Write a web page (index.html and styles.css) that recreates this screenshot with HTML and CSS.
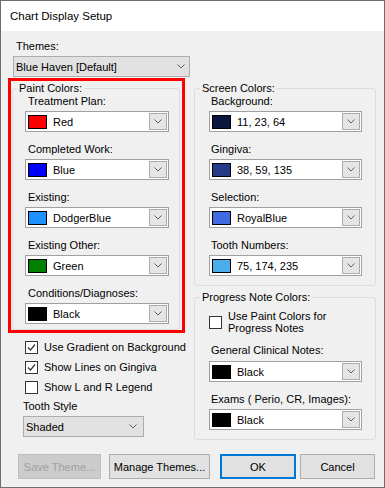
FILE: index.html
```html
<!DOCTYPE html>
<html lang="en">
<head>
    <meta charset="UTF-8">
    <title>Chart Display Setup</title>
    <link rel="stylesheet" href="styles.css">
</head>
<body>

<div class="dialog">
    <div class="titlebar">Chart Display Setup</div>

    <div class="content">
        <div class="themes">
            <div class="label">Themes:</div>
            <div class="dropdown">
                <span>Blue Haven [Default]</span>
                <svg class="chev" width="8" height="5" viewBox="0 0 8 5"><polyline points="0.5,0.5 4,4 7.5,0.5"/></svg>
            </div>
        </div>

        <div class="columns">
            <div class="left">
                <div class="highlight">
                    <fieldset class="group paint">
                        <legend>Paint Colors:</legend>
                        <div class="fields">
                            <div class="label">Treatment Plan:</div>
                            <div class="color-combo">
                                <span class="swatch" style="background:#ff0000"></span>
                                <span class="name">Red</span>
                                <span class="drop"><svg class="chev" width="8" height="5" viewBox="0 0 8 5"><polyline points="0.5,0.5 4,4 7.5,0.5"/></svg></span>
                            </div>

                            <div class="label">Completed Work:</div>
                            <div class="color-combo">
                                <span class="swatch" style="background:#0000ff"></span>
                                <span class="name">Blue</span>
                                <span class="drop"><svg class="chev" width="8" height="5" viewBox="0 0 8 5"><polyline points="0.5,0.5 4,4 7.5,0.5"/></svg></span>
                            </div>

                            <div class="label">Existing:</div>
                            <div class="color-combo">
                                <span class="swatch" style="background:#1e90ff"></span>
                                <span class="name">DodgerBlue</span>
                                <span class="drop"><svg class="chev" width="8" height="5" viewBox="0 0 8 5"><polyline points="0.5,0.5 4,4 7.5,0.5"/></svg></span>
                            </div>

                            <div class="label">Existing Other:</div>
                            <div class="color-combo">
                                <span class="swatch" style="background:#008000"></span>
                                <span class="name">Green</span>
                                <span class="drop"><svg class="chev" width="8" height="5" viewBox="0 0 8 5"><polyline points="0.5,0.5 4,4 7.5,0.5"/></svg></span>
                            </div>

                            <div class="label">Conditions/Diagnoses:</div>
                            <div class="color-combo">
                                <span class="swatch" style="background:#000000"></span>
                                <span class="name">Black</span>
                                <span class="drop"><svg class="chev" width="8" height="5" viewBox="0 0 8 5"><polyline points="0.5,0.5 4,4 7.5,0.5"/></svg></span>
                            </div>
                        </div>
                    </fieldset>
                </div>

                <div class="checks">
                    <div class="check">
                        <span class="box"><svg width="11" height="11" viewBox="0 0 11 11"><polyline points="2,5.5 4.5,8 9,2.5"/></svg></span>
                        <span>Use Gradient on Background</span>
                    </div>
                    <div class="check">
                        <span class="box"><svg width="11" height="11" viewBox="0 0 11 11"><polyline points="2,5.5 4.5,8 9,2.5"/></svg></span>
                        <span>Show Lines on Gingiva</span>
                    </div>
                    <div class="check">
                        <span class="box"></span>
                        <span>Show L and R Legend</span>
                    </div>
                </div>

                <div class="tooth">
                    <div class="label">Tooth Style</div>
                    <div class="dropdown">
                        <span>Shaded</span>
                        <svg class="chev" width="8" height="5" viewBox="0 0 8 5"><polyline points="0.5,0.5 4,4 7.5,0.5"/></svg>
                    </div>
                </div>
            </div>

            <div class="right">
                <fieldset class="group screen">
                    <legend>Screen Colors:</legend>
                    <div class="fields">
                        <div class="label">Background:</div>
                        <div class="color-combo">
                            <span class="swatch" style="background:rgb(11,23,64)"></span>
                            <span class="name">11, 23, 64</span>
                            <span class="drop"><svg class="chev" width="8" height="5" viewBox="0 0 8 5"><polyline points="0.5,0.5 4,4 7.5,0.5"/></svg></span>
                        </div>

                        <div class="label">Gingiva:</div>
                        <div class="color-combo">
                            <span class="swatch" style="background:rgb(38,59,135)"></span>
                            <span class="name">38, 59, 135</span>
                            <span class="drop"><svg class="chev" width="8" height="5" viewBox="0 0 8 5"><polyline points="0.5,0.5 4,4 7.5,0.5"/></svg></span>
                        </div>

                        <div class="label">Selection:</div>
                        <div class="color-combo">
                            <span class="swatch" style="background:#4169e1"></span>
                            <span class="name">RoyalBlue</span>
                            <span class="drop"><svg class="chev" width="8" height="5" viewBox="0 0 8 5"><polyline points="0.5,0.5 4,4 7.5,0.5"/></svg></span>
                        </div>

                        <div class="label">Tooth Numbers:</div>
                        <div class="color-combo">
                            <span class="swatch" style="background:rgb(75,174,235)"></span>
                            <span class="name">75, 174, 235</span>
                            <span class="drop"><svg class="chev" width="8" height="5" viewBox="0 0 8 5"><polyline points="0.5,0.5 4,4 7.5,0.5"/></svg></span>
                        </div>
                    </div>
                </fieldset>

                <fieldset class="group progress">
                    <legend>Progress Note Colors:</legend>
                    <div class="fields">
                        <div class="check two-line">
                            <span class="box"></span>
                            <span>Use Paint Colors for<br>Progress Notes</span>
                        </div>

                        <div class="label general">General Clinical Notes:</div>
                        <div class="color-combo general-combo">
                            <span class="swatch" style="background:#000000"></span>
                            <span class="name">Black</span>
                            <span class="drop"><svg class="chev" width="8" height="5" viewBox="0 0 8 5"><polyline points="0.5,0.5 4,4 7.5,0.5"/></svg></span>
                        </div>

                        <div class="label">Exams ( Perio, CR, Images):</div>
                        <div class="color-combo">
                            <span class="swatch" style="background:#000000"></span>
                            <span class="name">Black</span>
                            <span class="drop"><svg class="chev" width="8" height="5" viewBox="0 0 8 5"><polyline points="0.5,0.5 4,4 7.5,0.5"/></svg></span>
                        </div>
                    </div>
                </fieldset>
            </div>
        </div>

        <div class="buttons">
            <button class="btn save" disabled>Save Theme...</button>
            <button class="btn manage">Manage Themes...</button>
            <button class="btn ok">OK</button>
            <button class="btn cancel">Cancel</button>
        </div>
    </div>
</div>

</body>
</html>
```

FILE: styles.css
```css
body {
    margin: 0;
    font-family: "Liberation Sans", Arial, sans-serif;
    font-size: 11px;
    color: #000;
    background: #fff;
}
.dialog {
    width: 385px;
    height: 488px;
    box-sizing: border-box;
    border: 1px solid #6e6e6e;
    background: #f0f0f0;
}
.titlebar {
    height: 30px;
    line-height: 30px;
    padding-left: 9px;
    background: #fff;
    font-size: 11.5px;
}
.content {
    padding: 9px 8px 0 7px;
}
.label {
    line-height: 13px;
    white-space: nowrap;
}
.chev {
    fill: none;
    stroke: #606060;
    stroke-width: 1;
}

/* plain drop-down lists */
.dropdown {
    display: flex;
    align-items: center;
    justify-content: space-between;
    height: 21px;
    box-sizing: border-box;
    margin-top: 3px;
    padding: 0 4px 0 2px;
    border: 1px solid #adadad;
    background: #e1e1e1;
}
.themes {
    margin-left: 5px;
}
.themes .label {
    padding-left: 3px;
}
.themes .dropdown {
    width: 177px;
}

.columns {
    display: flex;
    align-items: flex-start;
    gap: 9px;
    margin-top: 1px;
}
.left {
    width: 177px;
}
.right {
    width: 182px;
}
.highlight {
    border: 3px solid #ff0000;
}

/* group boxes */
.group {
    margin: 0;
    padding: 0;
    min-width: 0;
    border: 1px solid #dcdcdc;
    border-radius: 3px;
}
.group legend {
    padding: 0 2px;
    line-height: 13px;
}
.group .label {
    margin-top: 11px;
}
.group .fields > .label:first-child {
    margin-top: 0;
}
.paint {
    margin: 1px 2px 0 1px;
}
.paint legend {
    margin-left: 4px;
}
.paint .fields {
    padding: 0 10px 5px 12px;
}
.paint .label {
    padding-left: 3px;
}
.screen {
    margin-top: 4px;
}
.screen legend,
.progress legend {
    margin-left: 5px;
}
.screen .fields {
    padding: 0 13px 9px 14px;
}
.right .label {
    padding-left: 2px;
}
.progress {
    margin-top: 5px;
}
.progress .fields {
    padding: 6px 13px 9px 14px;
}
.progress .label.general {
    margin-top: 10px;
}
.progress .general-combo {
    margin-top: 4px;
}

/* colour combos */
.color-combo {
    display: flex;
    align-items: center;
    height: 21px;
    box-sizing: border-box;
    margin-top: 3px;
    padding-left: 2px;
    border: 1px solid #a0a0a0;
    background: #fff;
}
.swatch {
    width: 19px;
    height: 14px;
    box-sizing: border-box;
    border: 1px solid #000;
}
.name {
    flex: 1;
    margin-left: 6px;
    white-space: nowrap;
}
.drop {
    display: flex;
    align-items: center;
    justify-content: center;
    width: 18px;
    height: 17px;
    box-sizing: border-box;
    margin-right: 1px;
    border: 1px solid #adadad;
    background: #e5e5e5;
}

/* check boxes */
.checks {
    margin-top: 4px;
    padding-left: 17px;
}
.check {
    display: flex;
    align-items: center;
    gap: 6px;
    height: 20px;
    white-space: nowrap;
}
.check.two-line {
    height: auto;
    line-height: 12px;
}
.box {
    display: flex;
    align-items: center;
    justify-content: center;
    flex: none;
    width: 13px;
    height: 13px;
    box-sizing: border-box;
    border: 1px solid #333;
    background: #fff;
}
.box svg {
    fill: none;
    stroke: #333;
    stroke-width: 1.2;
}

.tooth {
    margin-top: 3px;
    padding-left: 15px;
}
.tooth .dropdown {
    width: 121px;
    padding-right: 6px;
}

/* bottom buttons */
.buttons {
    display: flex;
    margin-top: 14px;
    padding-left: 10px;
}
.btn {
    height: 25px;
    box-sizing: border-box;
    padding: 0;
    border: 1px solid #adadad;
    background: #e1e1e1;
    font: inherit;
    color: #000;
}
.save {
    width: 83px;
    border-color: #bfbfbf;
    background: #cccccc;
    color: #a0a0a0;
}
.manage {
    width: 101px;
    margin-left: 8px;
}
.ok {
    width: 76px;
    margin-left: 10px;
    border: 2px solid #0078d7;
}
.cancel {
    width: 75px;
    margin-left: 4px;
}
```
